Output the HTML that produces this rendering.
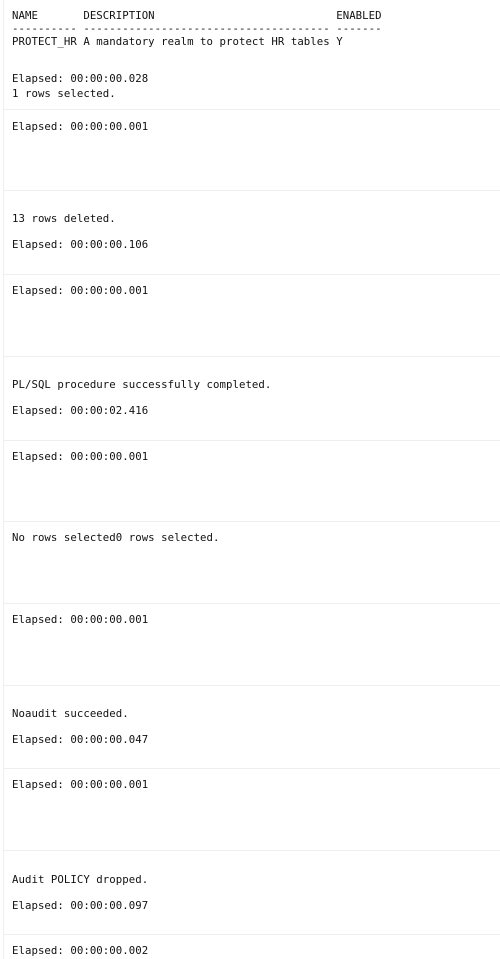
<!DOCTYPE html>
<html><head><style>
html,body{margin:0;padding:0;background:#fff;width:500px;height:959px;overflow:hidden}
body{position:relative;font-family:"DejaVu Sans Mono","Liberation Mono",monospace;font-size:10.7px;letter-spacing:0.05px;color:#111}
.t{position:absolute;left:12px;white-space:pre;line-height:13px}
.h{position:absolute;left:3px;right:0;height:1px;background:#efefef}
.v{position:absolute;left:3px;top:0;bottom:0;width:1px;background:#efefef}
</style></head><body>
<div class="v"></div>
<div class="t" style="top:9px">NAME       DESCRIPTION                            ENABLED</div>
<div class="t" style="top:22px">---------- -------------------------------------- -------</div>
<div class="t" style="top:35px">PROTECT_HR A mandatory realm to protect HR tables Y</div>
<div class="t" style="top:72px">Elapsed: 00:00:00.028</div>
<div class="t" style="top:87px">1 rows selected.</div>
<div class="h" style="top:109px"></div>
<div class="t" style="top:120px">Elapsed: 00:00:00.001</div>
<div class="h" style="top:190px"></div>
<div class="t" style="top:212px">13 rows deleted.</div>
<div class="t" style="top:238px">Elapsed: 00:00:00.106</div>
<div class="h" style="top:274px"></div>
<div class="t" style="top:284px">Elapsed: 00:00:00.001</div>
<div class="h" style="top:356px"></div>
<div class="t" style="top:378px">PL/SQL procedure successfully completed.</div>
<div class="t" style="top:404px">Elapsed: 00:00:02.416</div>
<div class="h" style="top:440px"></div>
<div class="t" style="top:450px">Elapsed: 00:00:00.001</div>
<div class="h" style="top:521px"></div>
<div class="t" style="top:531px">No rows selected0 rows selected.</div>
<div class="h" style="top:603px"></div>
<div class="t" style="top:613px">Elapsed: 00:00:00.001</div>
<div class="h" style="top:685px"></div>
<div class="t" style="top:707px">Noaudit succeeded.</div>
<div class="t" style="top:733px">Elapsed: 00:00:00.047</div>
<div class="h" style="top:768px"></div>
<div class="t" style="top:778px">Elapsed: 00:00:00.001</div>
<div class="h" style="top:850px"></div>
<div class="t" style="top:873px">Audit POLICY dropped.</div>
<div class="t" style="top:899px">Elapsed: 00:00:00.097</div>
<div class="h" style="top:934px"></div>
<div class="t" style="top:944px">Elapsed: 00:00:00.002</div>
</body></html>
